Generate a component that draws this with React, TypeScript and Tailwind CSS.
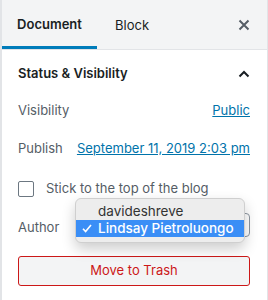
import React from "react";

const font = { fontFamily: "Inter, 'Noto Sans', sans-serif" };

const Row = ({ label, children }: { label: string; children?: React.ReactNode }) => (
  <div className="flex items-center justify-between h-[38px]">
    <span className="text-[13px] text-[#555d66]">{label}</span>
    {children}
  </div>
);

export default function App() {
  return (
    <div
      className="w-[268px] h-[300px] bg-white border-l-2 border-r border-[#e2e4e7] overflow-hidden"
      style={font}
    >
      {/* tabs */}
      <div className="flex items-stretch h-[50px] bg-[#f3f4f5] border-b border-[#e2e4e7]">
        <div className="w-[95px] flex items-center justify-center border-b-[3px] border-[#007cba] pt-[3px]">
          <span className="text-[13px] font-semibold text-[#191e23]">Document</span>
        </div>
        <div className="flex items-center pl-[18px] pt-[3px]">
          <span className="text-[13px] text-[#191e23]">Block</span>
        </div>
        <div className="ml-auto flex items-center pr-[17px]">
          <svg width="12" height="12" viewBox="0 0 12 12">
            <path d="M1.5 1.5l9 9M10.5 1.5l-9 9" stroke="#555d66" strokeWidth="2" />
          </svg>
        </div>
      </div>

      <div className="px-4">
        {/* section header */}
        <div className="flex items-center justify-between h-[47px]">
          <span className="text-[13px] font-semibold text-[#191e23]">Status &amp; Visibility</span>
          <svg width="12" height="8" viewBox="0 0 12 8" className="mr-[1px]">
            <path d="M1.5 6.5L6 2l4.5 4.5" stroke="#191e23" strokeWidth="2" fill="none" />
          </svg>
        </div>

        <div className="mt-[-5px] pr-[1px]">
          <Row label="Visibility">
            <a className="text-[13px] text-[#0073aa] underline">Public</a>
          </Row>
          <Row label="Publish">
            <a className="text-[13px] text-[#0073aa] underline">September 11, 2019 2:03 pm</a>
          </Row>

          <div className="flex items-center h-[42px] gap-3">
            <div className="w-4 h-4 border-[1.5px] border-[#6c7781] rounded-[2px] bg-white" />
            <span className="text-[13px] text-[#555d66]">Stick to the top of the blog</span>
          </div>

          {/* author */}
          <div className="relative flex items-center justify-between h-[36px]">
            <span className="text-[13px] text-[#555d66]">Author</span>
            <div className="w-[174px] h-[24px] mb-[6px] border border-[#8d96a0] rounded-[4px] bg-white" />
            <div className="absolute left-[57px] top-[-12px] w-[170px] rounded-[6px] bg-[#ededed] border border-[#cfcfcf] shadow-[0_6px_14px_rgba(0,0,0,0.2)] pt-[3px] pb-[5px]">
              <div className="flex items-center h-[18px] pl-[22px] text-[13.5px] text-[#333]">davideshreve</div>
              <div className="flex items-center h-[17px] bg-[#3a8ef6] text-[13.5px] font-medium text-white">
                <span className="w-[22px] flex justify-center">
                  <svg width="10" height="9" viewBox="0 0 10 9">
                    <path d="M1 4.8l2.6 2.8L9 1" stroke="#fff" strokeWidth="1.6" fill="none" />
                  </svg>
                </span>
                <span>Lindsay Pietroluongo</span>
              </div>
            </div>
          </div>

          <div className="mt-[10px] h-[30px] flex items-center justify-center border border-[#cc1818] rounded-[3px] bg-[#f3f4f5]">
            <span className="text-[13px] text-[#cc1818]">Move to Trash</span>
          </div>
        </div>
      </div>
    </div>
  );
}
